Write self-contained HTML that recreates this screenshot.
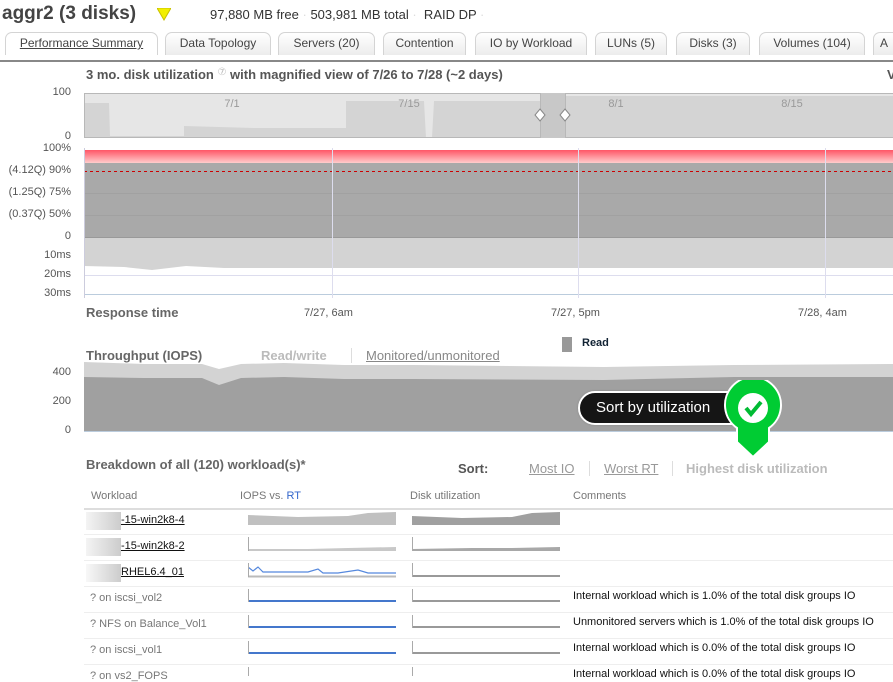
<!DOCTYPE html>
<html><head><meta charset="utf-8"><style>
*{margin:0;padding:0;box-sizing:border-box}
body{width:893px;height:676px;overflow:hidden;background:#fff;font-family:"Liberation Sans",sans-serif;position:relative;color:#444}
.a{position:absolute;white-space:nowrap}
.tab{position:absolute;top:32px;height:23px;border:1px solid #d4d4d4;border-bottom:none;border-radius:7px 7px 0 0;background:linear-gradient(#fff,#ececec);font-size:12px;color:#444;text-align:center;line-height:21px}
.yl{position:absolute;right:822px;font-size:11px;color:#555;text-align:right}
.row{position:absolute;left:84px;width:809px;height:1px;background:#eee}
.wl{position:absolute;left:90px;font-size:11px;color:#777}
.cm{position:absolute;left:573px;font-size:11px;color:#111}
</style></head><body>
<div class="a" style="left:2px;top:3px;font-size:19px;font-weight:bold;color:#444">aggr2 (3 disks)</div>
<svg class="a" style="left:157px;top:8px" width="14" height="13"><polygon points="0,0 14,0 7,12" fill="#f2ef00" stroke="#c8c000" stroke-width="1"/></svg>
<div class="a" style="left:210px;top:7px;font-size:13px;color:#333">97,880 MB free <span style="color:#ddd">·</span> 503,981 MB total <span style="color:#ddd">·</span> &nbsp;RAID DP <span style="color:#ddd">·</span></div>

<div class="tab" style="left:5px;width:153px;background:#fff"><span style="text-decoration:underline">Performance Summary</span></div>
<div class="tab" style="left:165px;width:106px">Data Topology</div>
<div class="tab" style="left:278px;width:97px">Servers (20)</div>
<div class="tab" style="left:383px;width:83px">Contention</div>
<div class="tab" style="left:475px;width:112px">IO by Workload</div>
<div class="tab" style="left:595px;width:72px">LUNs (5)</div>
<div class="tab" style="left:676px;width:74px">Disks (3)</div>
<div class="tab" style="left:759px;width:106px">Volumes (104)</div>
<div class="tab" style="left:873px;width:30px;text-align:left;padding-left:6px">A</div>
<div class="a" style="left:0;top:60px;width:893px;height:2px;background:#888"></div>

<div class="a" style="left:86px;top:67px;font-size:13px;font-weight:bold;color:#555">3 mo. disk utilization <span style="font-weight:normal;color:#bbb;font-size:10px;vertical-align:top">⑦</span> with magnified view of 7/26 to 7/28 (~2 days)</div>
<div class="a" style="left:887px;top:67px;font-size:13px;font-weight:bold;color:#555">V</div>

<div class="yl" style="top:86px">100</div><div class="yl" style="top:130px">0</div>
<svg class="a" style="left:84px;top:93px" width="809" height="45">
<rect x="0" y="0" width="809" height="45" fill="#e6e6e6"/>
<path d="M0,45 L0,10 L25,10 L26,43 L100,43 L100,33 L170,35 L262,35 L262,8 L340,8 L342,45 L348,45 L350,8 L456,8 L456,45 Z" fill="#d4d4d4"/>
<rect x="456" y="0" width="25" height="45" fill="#c8c8c8"/>
<rect x="481" y="3" width="328" height="42" fill="#d4d4d4"/>
<rect x="0.5" y="0.5" width="456" height="44" fill="none" stroke="#b8b8b8"/>
<rect x="481.5" y="0.5" width="330" height="44" fill="none" stroke="#b8b8b8"/>
<polygon points="456,16 461,22 456,28 451,22" fill="#fff" stroke="#888"/>
<polygon points="481,16 486,22 481,28 476,22" fill="#fff" stroke="#888"/>
<text x="148" y="14" font-size="11" fill="#999" text-anchor="middle" font-family="Liberation Sans">7/1</text>
<text x="325" y="14" font-size="11" fill="#999" text-anchor="middle" font-family="Liberation Sans">7/15</text>
<text x="532" y="14" font-size="11" fill="#999" text-anchor="middle" font-family="Liberation Sans">8/1</text>
<text x="708" y="14" font-size="11" fill="#999" text-anchor="middle" font-family="Liberation Sans">8/15</text>
</svg>

<svg class="a" style="left:84px;top:148px" width="809" height="150">
<defs><linearGradient id="r" x1="0" y1="0" x2="0" y2="1"><stop offset="0" stop-color="#f56"/><stop offset="1" stop-color="#fcc"/></linearGradient></defs>
<rect x="0" y="2" width="809" height="13" fill="url(#r)"/>
<rect x="0" y="15" width="809" height="74" fill="#a9a9a9"/>
<rect x="0" y="89" width="809" height="40" fill="#d3d3d3"/>
<path d="M0,118 L40,119 L68,122 L102,118 L140,120 L400,120 L809,120 L809,150 L0,150Z" fill="#fff"/>
<line x1="0" y1="23.5" x2="809" y2="23.5" stroke="#c00" stroke-dasharray="3,3"/>
<line x1="0" y1="45.5" x2="809" y2="45.5" stroke="#999" stroke-width=".5"/>
<line x1="0" y1="67.5" x2="809" y2="67.5" stroke="#999" stroke-width=".5"/>
<line x1="0" y1="89.5" x2="809" y2="89.5" stroke="#999"/>
<line x1="0" y1="127.5" x2="809" y2="127.5" stroke="#dde"/>
<line x1="0" y1="146.5" x2="809" y2="146.5" stroke="#bcd"/>
<line x1="0.5" y1="0" x2="0.5" y2="150" stroke="#ccd"/>
<line x1="248.5" y1="0" x2="248.5" y2="150" stroke="#dde" />
<line x1="494.5" y1="0" x2="494.5" y2="150" stroke="#dde"/>
<line x1="741.5" y1="0" x2="741.5" y2="150" stroke="#dde"/>
</svg>
<div class="yl" style="top:142px">100%</div>
<div class="yl" style="top:164px">(4.12Q) 90%</div>
<div class="yl" style="top:186px">(1.25Q) 75%</div>
<div class="yl" style="top:208px">(0.37Q) 50%</div>
<div class="yl" style="top:230px">0</div>
<div class="yl" style="top:249px">10ms</div>
<div class="yl" style="top:268px">20ms</div>
<div class="yl" style="top:287px">30ms</div>

<div class="a" style="left:86px;top:305px;font-size:13px;font-weight:bold;color:#666">Response time</div>
<div class="a" style="left:304px;top:307px;font-size:11px;color:#555">7/27, 6am</div>
<div class="a" style="left:551px;top:307px;font-size:11px;color:#555">7/27, 5pm</div>
<div class="a" style="left:798px;top:307px;font-size:11px;color:#555">7/28, 4am</div>

<div class="a" style="left:86px;top:348px;font-size:13px;font-weight:bold;color:#666">Throughput (IOPS)</div>
<div class="a" style="left:261px;top:348px;font-size:13px;font-weight:bold;color:#bbb">Read/write</div>
<div class="a" style="left:351px;top:348px;width:1px;height:15px;background:#ddd"></div>
<div class="a" style="left:366px;top:348px;font-size:13px;color:#888;text-decoration:underline">Monitored/unmonitored</div>
<div class="a" style="left:562px;top:337px;width:10px;height:15px;background:#999"></div>
<div class="a" style="left:582px;top:337px;font-size:11px;font-weight:bold;color:#123">Read</div>

<svg class="a" style="left:84px;top:358px" width="809" height="76">
<path d="M0,4 L60,6 L118,6 L135,11 L157,6 L200,5 L260,7 L330,7 L520,9 L650,7 L809,6 L809,74 L0,74Z" fill="#d3d3d3"/>
<path d="M0,19 L60,20 L118,20 L135,27 L157,20 L200,19 L260,21 L330,21 L520,22 L650,19 L809,19 L809,74 L0,74Z" fill="#a0a0a0"/>
<line x1="0" y1="73.5" x2="809" y2="73.5" stroke="#bcd"/>
</svg>
<div class="yl" style="top:366px">400</div>
<div class="yl" style="top:395px">200</div>
<div class="yl" style="top:424px">0</div>

<div class="a" style="left:578px;top:391px;width:170px;height:34px;border-radius:17px;background:#151515;border:2px solid #fff;box-shadow:0 0 2px #888"></div>
<div class="a" style="left:596px;top:399px;font-size:15px;color:#fff">Sort by utilization</div>
<svg class="a" style="left:722px;top:380px" width="62" height="80">
<path d="M31,77 L15,62 L15,48 A28,28 0 1,1 47,48 L47,62 Z" fill="#0c3" stroke="#fff" stroke-width="2"/>
<circle cx="31" cy="28" r="15" fill="#fff"/>
<path d="M24,28 L29,34 L39,22" fill="none" stroke="#0b3" stroke-width="4"/>
</svg>

<div class="a" style="left:86px;top:457px;font-size:13px;font-weight:bold;color:#666">Breakdown of all (120) workload(s)*</div>
<div class="a" style="left:458px;top:461px;font-size:13px;font-weight:bold;color:#555">Sort:</div>
<div class="a" style="left:529px;top:461px;font-size:13px;color:#999;text-decoration:underline">Most IO</div>
<div class="a" style="left:589px;top:461px;width:1px;height:15px;background:#ddd"></div>
<div class="a" style="left:604px;top:461px;font-size:13px;color:#999;text-decoration:underline">Worst RT</div>
<div class="a" style="left:672px;top:461px;width:1px;height:15px;background:#ddd"></div>
<div class="a" style="left:686px;top:461px;font-size:13px;font-weight:bold;color:#bbb">Highest disk utilization</div>

<div class="a" style="left:91px;top:490px;font-size:11px;color:#777">Workload</div>
<div class="a" style="left:240px;top:490px;font-size:11px;color:#777">IOPS vs. <span style="color:#36c">RT</span></div>
<div class="a" style="left:410px;top:490px;font-size:11px;color:#777">Disk utilization</div>
<div class="a" style="left:573px;top:490px;font-size:11px;color:#777">Comments</div>
<div class="row" style="top:508px;background:#ddd;height:2px"></div>
<div class="row" style="top:534px"></div><div class="row" style="top:560px"></div><div class="row" style="top:586px"></div><div class="row" style="top:612px"></div><div class="row" style="top:638px"></div><div class="row" style="top:664px"></div>

<div class="a" style="left:86px;top:512px;width:35px;height:18px;background:linear-gradient(90deg,#f4f4f4,#ccc)"></div>
<div class="a" style="left:121px;top:514px;font-size:11px;color:#111;text-decoration:underline">-15-win2k8-4</div>
<div class="a" style="left:86px;top:538px;width:35px;height:18px;background:linear-gradient(90deg,#f4f4f4,#ccc)"></div>
<div class="a" style="left:121px;top:540px;font-size:11px;color:#111;text-decoration:underline">-15-win2k8-2</div>
<div class="a" style="left:86px;top:564px;width:35px;height:18px;background:linear-gradient(90deg,#f8f8f8,#ccc)"></div>
<div class="a" style="left:121px;top:566px;font-size:11px;color:#111;text-decoration:underline">RHEL6.4_01</div>
<div class="wl" style="top:592px">? on iscsi_vol2</div>
<div class="wl" style="top:618px">? NFS on Balance_Vol1</div>
<div class="wl" style="top:644px">? on iscsi_vol1</div>
<div class="wl" style="top:670px">? on vs2_FOPS</div>

<svg class="a" style="left:248px;top:510px" width="150" height="166">
<path d="M0,5 L50,7 L100,6 L120,3 L148,2 L148,15 L0,15Z" fill="#c0c0c0"/>
<path d="M0,39 L60,39 L100,38 L148,37 L148,41 L0,41Z" fill="#c8c8c8"/>
<path d="M0,57 L5,61 L10,57 L15,62 L40,62 L60,62 L70,59 L75,63 L90,63 L110,60 L120,63 L148,63" fill="none" stroke="#58d" stroke-width="1.2"/>
<line x1="0" y1="66.5" x2="148" y2="66.5" stroke="#bbb" stroke-width="2"/>
<line x1="0" y1="91" x2="148" y2="91" stroke="#47c" stroke-width="2"/>
<line x1="0" y1="117" x2="148" y2="117" stroke="#47c" stroke-width="2"/>
<line x1="0" y1="143" x2="148" y2="143" stroke="#47c" stroke-width="2"/>
<g stroke="#aaa"><line x1=".5" y1="27" x2=".5" y2="41"/><line x1=".5" y1="53" x2=".5" y2="67"/><line x1=".5" y1="79" x2=".5" y2="92"/><line x1=".5" y1="105" x2=".5" y2="118"/><line x1=".5" y1="131" x2=".5" y2="144"/><line x1=".5" y1="157" x2=".5" y2="166"/></g>
</svg>
<svg class="a" style="left:412px;top:510px" width="150" height="166">
<path d="M0,6 L50,8 L100,7 L120,3 L148,2 L148,15 L0,15Z" fill="#a0a0a0"/>
<path d="M0,39 L60,38 L100,38 L148,37 L148,41 L0,41Z" fill="#a8a8a8"/>
<g stroke="#999" stroke-width="2"><line x1="0" y1="66" x2="148" y2="66"/><line x1="0" y1="91" x2="148" y2="91"/><line x1="0" y1="117" x2="148" y2="117"/><line x1="0" y1="143" x2="148" y2="143"/></g>
<g stroke="#aaa"><line x1=".5" y1="27" x2=".5" y2="41"/><line x1=".5" y1="53" x2=".5" y2="67"/><line x1=".5" y1="79" x2=".5" y2="92"/><line x1=".5" y1="105" x2=".5" y2="118"/><line x1=".5" y1="131" x2=".5" y2="144"/><line x1=".5" y1="157" x2=".5" y2="166"/></g>
</svg>
<div class="cm" style="top:590px">Internal workload which is 1.0% of the total disk groups IO</div>
<div class="cm" style="top:616px">Unmonitored servers which is 1.0% of the total disk groups IO</div>
<div class="cm" style="top:642px">Internal workload which is 0.0% of the total disk groups IO</div>
<div class="cm" style="top:668px">Internal workload which is 0.0% of the total disk groups IO</div>
</body></html>
